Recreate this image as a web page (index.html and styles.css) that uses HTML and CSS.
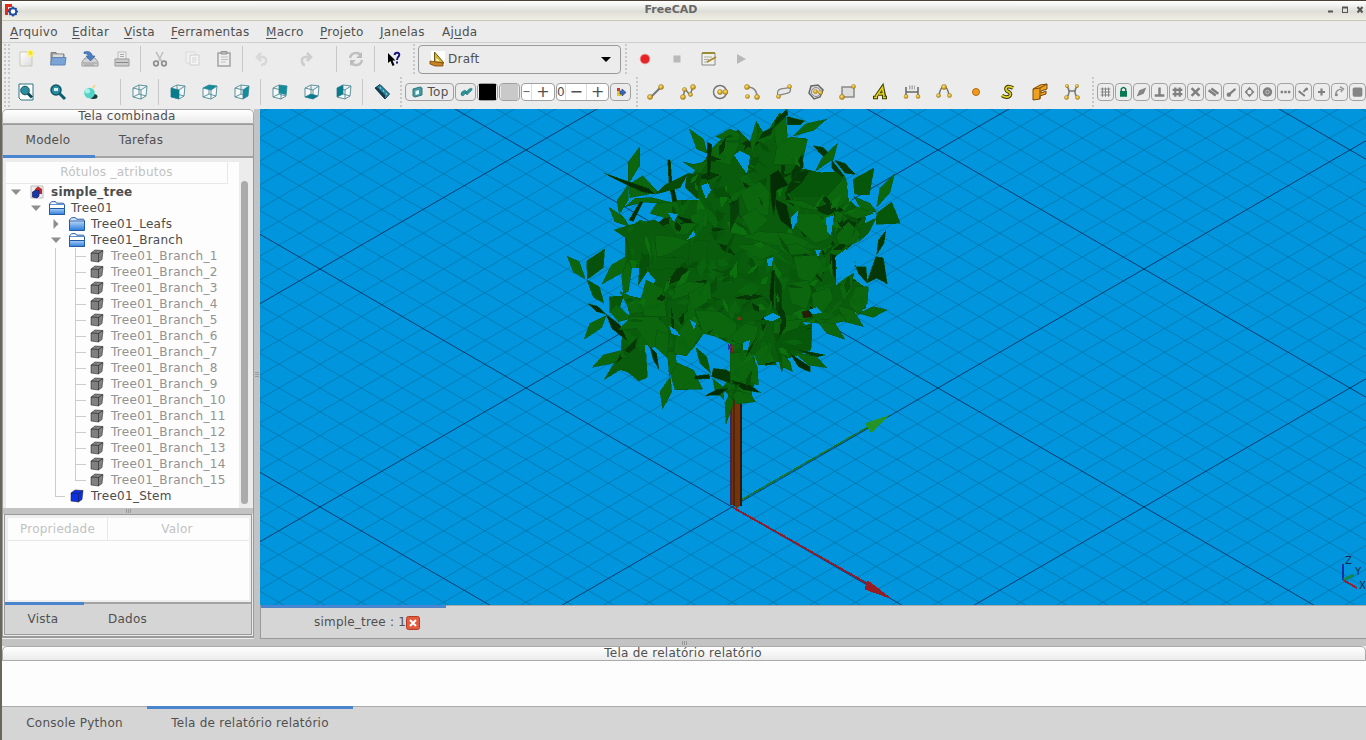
FILE: index.html
```html
<!DOCTYPE html>
<html lang="pt">
<head>
<meta charset="utf-8">
<title>FreeCAD</title>
<link rel="stylesheet" href="styles.css">
</head>
<body>
<svg class="defs" width="0" height="0">
  <defs>
    <linearGradient id="gFolder" x1="0" y1="0" x2="0" y2="1"><stop offset="0" stop-color="#a8cdf5"/><stop offset="1" stop-color="#2f7fdc"/></linearGradient>
    <linearGradient id="gPaper" x1="0" y1="0" x2="1" y2="1"><stop offset="0" stop-color="#fff"/><stop offset="1" stop-color="#dcdcdc"/></linearGradient>
    <radialGradient id="gBall" cx=".4" cy=".35" r=".7"><stop offset="0" stop-color="#ffe66b"/><stop offset="1" stop-color="#b88200"/></radialGradient>
    <symbol id="dot" viewBox="0 0 6 6"><circle cx="3" cy="3" r="2.5" fill="url(#gBall)" stroke="#8c6c20" stroke-width=".5"/></symbol>
    <symbol id="wire" viewBox="0 0 20 20"><path d="M3 6L9 3L17 4L16 14L11 17L3 15ZM3 6L11 8L17 4M11 8V17M9 3V12L3 15M9 12L16 14" fill="#fff" fill-opacity=".6" stroke="#4b8995" stroke-width=".9"/></symbol>
    <symbol id="folder" viewBox="0 0 16 14" preserveAspectRatio="none"><path d="M.5 13.500V3L2.500 .7H6.500L7.500 2.200H14.500L15.500 4V13.500Z" fill="#dcecff" stroke="#2459a8"/><path d="M1 5H15V13H1Z" fill="url(#gFolder)"/><path d="M1 4H15" stroke="#2459a8"/></symbol>
    <symbol id="folderOpen" viewBox="0 0 16 14" preserveAspectRatio="none"><path d="M.5 13.500V3L2.500 .7H6.500L7.500 2.200H14.500L15.500 4V13.500Z" fill="#fff" stroke="#2459a8"/><path d="M1 3.500H15" stroke="#5e91d2"/><path d="M.5 7.500H15.500V13.500H.5Z" fill="url(#gFolder)" stroke="#2459a8"/></symbol>
    <symbol id="cube" viewBox="0 0 14 14"><path d="M1 4L5 1L13 1.500L12 10.500L8.500 13L1 12Z" fill="currentColor" stroke="#222" stroke-opacity=".55"/><path d="M1 4L8.500 4.500L13 1.500M8.500 4.500V13" fill="none" stroke="#222" stroke-opacity=".6"/></symbol>
  </defs>
</svg>

<div class="window">
  <header class="titlebar">
    <svg class="logo" viewBox="0 0 14 14"><path d="M1 1H8V4H4V6H7V8H4V12H1Z" fill="#e02b18"/><circle cx="9" cy="8.500" r="3.300" fill="#fff" stroke="#1a50a8" stroke-width="2"/><path d="M9 3.500V5M9 12V13.500M4 8.500H5.500M12.500 8.500H14M5.500 5L6.500 6M11.500 11L12.500 12M12.500 5L11.500 6M5.500 12L6.500 11" stroke="#1a3f90" stroke-width="1.500"/></svg>
    <span class="title">FreeCAD</span>
    <svg class="winbtns" viewBox="0 0 40 12"><path d="M2 7.500H7" stroke="#555" stroke-width="2"/><rect x="16.500" y="3.500" width="5" height="5" fill="none" stroke="#555"/><path d="M16 3.500H22" stroke="#555" stroke-width="2"/><path d="M31.500 3L36.500 8.500M36.500 3L31.500 8.500" stroke="#555" stroke-width="2"/></svg>
  </header>
  <nav class="menubar">
    <span class="m1"><u>A</u>rquivo</span><span class="m2"><u>E</u>ditar</span><span class="m3"><u>V</u>ista</span><span class="m4"><u>F</u>erramentas</span><span class="m5"><u>M</u>acro</span><span class="m6"><u>P</u>rojeto</span><span class="m7"><u>J</u>anelas</span><span class="m8">Aj<u>u</u>da</span>
  </nav>

  <div class="toolbars">
    <div class="toolrow">
      <i class="handle"></i>
      <svg class="tb" viewBox="0 0 20 20"><path d="M4 3H16V17H4Z" fill="url(#gPaper)" stroke="#c9c9b8"/><circle cx="14.500" cy="4.500" r="3.800" fill="#fff27a" opacity=".8"/><circle cx="14.500" cy="4" r="2" fill="#f5e21c"/></svg>
      <svg class="tb" viewBox="0 0 20 20"><path d="M3 15V3.500H8L9 5H16V15Z" fill="#9a9a9a" stroke="#808080"/><path d="M5 5.500H15V9H5Z" fill="#ddd"/><path d="M2.500 16L4 8.500H18L17 16Z" fill="#7aa3d6" stroke="#5e86b8"/></svg>
      <svg class="tb" viewBox="0 0 20 20"><path d="M2 13L5 9H15L18 13V17H2Z" fill="#d4d4d4" stroke="#999"/><path d="M3 14H17M4 16H14" stroke="#999"/><path d="M4 3Q11 1 12.500 7H15L10.500 12L6 7H8.500Q8 4 4 4.500Z" fill="#4d7fc0" stroke="#3766a5" stroke-width=".7"/></svg>
      <svg class="tb" viewBox="0 0 20 20"><path d="M6 3H14V11H6Z" fill="#eee" stroke="#bbb"/><path d="M3 10H17V17H3Z" fill="#ccc" stroke="#999"/><path d="M4 13.500H16" stroke="#888"/><path d="M8 5.500H12M8 7.500H12" stroke="#aaa"/></svg>
      <i class="sep"></i>
      <svg class="tb" viewBox="0 0 20 20"><path d="M6 3L12 13M13 3L8 13" stroke="#c0c0c0" stroke-width="1.500"/><circle cx="6" cy="14.500" r="2.300" fill="none" stroke="#8e8e8e" stroke-width="1.700"/><circle cx="14" cy="14.500" r="2.300" fill="none" stroke="#8e8e8e" stroke-width="1.700"/></svg>
      <svg class="tb" viewBox="0 0 20 20"><path d="M4 3H13V14H4Z" fill="#f1f1f1" stroke="#dadada"/><path d="M8 6H17V16H8Z" fill="#f5f5f5" stroke="#cfcfcf"/><path d="M10 9H15M10 11H15M10 13H14" stroke="#d5d5d5"/></svg>
      <svg class="tb" viewBox="0 0 20 20"><path d="M4 4H16V17H4Z" fill="#eee" stroke="#a2a2a2" stroke-width="1.500"/><path d="M7 2.500H13V5H7Z" fill="#bbb" stroke="#929292"/><path d="M7 8H14M7 10.500H14M7 13H12" stroke="#c0c0c0"/></svg>
      <i class="sep"></i>
      <svg class="tb drop" viewBox="0 0 20 20"><path d="M5 8H11Q15 9 14 13Q13 16 9 16M9 4L5 8L9 12" fill="none" stroke="#d8d8d8" stroke-width="2.500"/></svg>
      <svg class="tb drop" viewBox="0 0 20 20"><path d="M15 8H9Q5 9 6 13Q7 16 9 16M11 4L15 8L11 12" fill="none" stroke="#cdcdcd" stroke-width="2.500"/></svg>
      <i class="sep"></i>
      <svg class="tb" viewBox="0 0 20 20"><path d="M4 9Q5 4 10 4Q13 4 15 6M16 11Q15 16 10 16Q7 16 5 14" fill="none" stroke="#c0c0c0" stroke-width="2.500"/><path d="M16 3V9H10ZM4 17V11H10Z" fill="#bbb"/></svg>
      <i class="sep"></i>
      <svg class="tb" viewBox="0 0 20 20"><path d="M4 4V14L6.500 12L8.500 17L10.500 16L8.500 11.500H11.500Z" fill="#000"/><path d="M10.500 6Q11 3.500 13.500 3.800Q16 4.300 15 7Q13 8.500 13 11M13 12.500V14.500" fill="none" stroke="#15157a" stroke-width="2"/></svg>
      <i class="handle h1"></i>
      <div class="combo"><svg viewBox="0 0 18 18"><path d="M2 1H16V15H2Z" fill="#fff"/><path d="M5.500 2L15 13H5.500Z" fill="#d9b52a" stroke="#6d5b14"/><path d="M7.500 8L10.500 11H7.500Z" fill="#fff"/><path d="M1 11L14 13V16H6L1 14Z" fill="#c98224" stroke="#754710" stroke-width=".8"/></svg><span>Draft</span><b class="arrow"></b></div>
      <i class="handle h2"></i>
      <svg class="tb" viewBox="0 0 20 20"><circle cx="10" cy="10" r="4.800" fill="#e52525" stroke="#f08a8a" stroke-width=".8"/></svg>
      <svg class="tb" viewBox="0 0 20 20"><path d="M6.500 6.500H13.500V13.500H6.500Z" fill="#b9b9b9"/></svg>
      <svg class="tb" viewBox="0 0 20 20"><path d="M3 4H16V16H3Z" fill="#f1f1e9" stroke="#888"/><path d="M3 4H16" stroke="#9a8b3b" stroke-width="2"/><path d="M5 8H13M5 10.500H10M5 13H9" stroke="#aaa"/><path d="M8 13L17 8" stroke="#a78b2c" stroke-width="2"/></svg>
      <svg class="tb" viewBox="0 0 20 20"><path d="M6 5L15 10L6 15Z" fill="#b8b8b8"/></svg>
    </div>

    <div class="toolrow">
      <i class="handle"></i>
      <svg class="tb" viewBox="0 0 20 20"><path d="M3 2H17V18H5L3 16Z" fill="#fff" stroke="#2b7484"/><circle cx="9" cy="8.500" r="4.300" fill="#2c8d9e" stroke="#0e5361"/><path d="M12 11.500L16 15.500" stroke="#0b4655" stroke-width="3"/></svg>
      <svg class="tb" viewBox="0 0 20 20"><circle cx="8" cy="8" r="5" fill="#2c8d9e" stroke="#0c5567" stroke-width="1.500"/><path d="M6 6H10V9H6Z" fill="#d2f4f7"/><path d="M11.500 11.500L17 17" stroke="#0b5d70" stroke-width="3"/></svg>
      <svg class="tb" viewBox="0 0 20 20"><ellipse cx="13.500" cy="14.500" rx="4" ry="2.500" fill="#173d3a"/><circle cx="9.500" cy="11" r="5.300" fill="#52d3c5"/><circle cx="7.500" cy="9" r="2.500" fill="#a4f2e8"/><path d="M13 6L15 3" stroke="#f4d684" stroke-width="2"/></svg>
      <i class="sep wide"></i>
      <svg class="tb" viewBox="0 0 20 20"><use href="#wire"/></svg>
      <i class="sep"></i>
      <svg class="tb" viewBox="0 0 20 20"><use href="#wire"/><path d="M3 6L11 8V17L3 15Z" fill="#087c8c"/></svg>
      <svg class="tb" viewBox="0 0 20 20"><use href="#wire"/><path d="M3 6L9 3L17 4L11 8Z" fill="#158c9c"/></svg>
      <svg class="tb" viewBox="0 0 20 20"><use href="#wire"/><path d="M11 8L17 4L16 14L11 17Z" fill="#158c9c"/></svg>
      <i class="sep"></i>
      <svg class="tb" viewBox="0 0 20 20"><use href="#wire"/><path d="M9 3L17 4L16 13L9 11Z" fill="#158c9c"/></svg>
      <svg class="tb" viewBox="0 0 20 20"><use href="#wire"/><path d="M3 15L9 12L16 14L11 17Z" fill="#087c8c"/></svg>
      <svg class="tb" viewBox="0 0 20 20"><use href="#wire"/><path d="M3 6L9 3V12L3 15Z" fill="#087c8c"/></svg>
      <i class="sep"></i>
      <svg class="tb" viewBox="0 0 20 20"><path d="M3 6L8 2.500L17.500 12L13 17Z" fill="#2787a1" stroke="#173d50"/><path d="M3 6L13 17V13L5 5Z" fill="#16394b"/><path d="M8 5L9 7M11 8L12 10M14 11L15 13" stroke="#8fd3df"/></svg>
      <i class="handle h3"></i>
      <div class="btn top"><svg viewBox="0 0 14 14"><path d="M3 4L10 2L12 3V10L5 12L3 11Z" fill="#4a979d" stroke="#2a7981"/><path d="M5.500 6L9 5V9L5.500 10Z" fill="#dff"/></svg>Top</div>
      <div class="btn lk"><svg viewBox="0 0 14 14"><path d="M2 10Q1 7 6 5L8 7L4 11ZM6 8L10 4Q14 2 13 5L8 10Z" fill="#2d959c" stroke="#206b75" stroke-width=".5"/></svg></div>
      <div class="btn sw"><b class="black"></b></div>
      <div class="btn sw"><b class="grey"></b></div>
      <div class="spin s1"><span class="cut">−</span><span>+</span></div>
      <div class="spin s2"><em>0</em><span>−</span><span>+</span></div>
      <div class="btn sw lk2"><svg viewBox="0 0 14 14"><path d="M3 3H6V11H3Z" fill="#cf3535"/><path d="M3 6H7V11H3Z" fill="#e5c62d"/><path d="M6 6H8V4L12 7.500L8 11V9H6Z" fill="#3b66b5" stroke="#234480" stroke-width=".7"/></svg></div>
      <i class="handle h4"></i>
      <svg class="tb" viewBox="0 0 20 20"><path d="M5 15L15 5" stroke="#777" stroke-width="2"/><use href="#dot" x="1" y="12" width="6" height="6"/><use href="#dot" x="12" y="2" width="6" height="6"/></svg>
      <svg class="tb" viewBox="0 0 20 20"><path d="M5 15L7 7L12 13L15 5" stroke="#777" stroke-width="1.500" fill="none"/><use href="#dot" x="2" y="12" width="6" height="6"/><use href="#dot" x="4" y="5" width="5" height="5"/><use href="#dot" x="10" y="10" width="5" height="5"/><use href="#dot" x="12" y="2" width="6" height="6"/></svg>
      <svg class="tb" viewBox="0 0 20 20"><circle cx="10" cy="10" r="6.500" fill="#eee" stroke="#777" stroke-width="1.500"/><use href="#dot" x="7" y="7" width="6" height="6"/><use href="#dot" x="12.500" y="7" width="6" height="6"/></svg>
      <svg class="tb" viewBox="0 0 20 20"><path d="M5 5Q15 5 15 15" stroke="#888" stroke-width="1.500" fill="none"/><use href="#dot" x="2" y="2" width="6" height="6"/><use href="#dot" x="3" y="12" width="5" height="5"/><use href="#dot" x="12" y="12" width="6" height="6"/></svg>
      <svg class="tb" viewBox="0 0 20 20"><path d="M4 14C1 4 12 8 16 5C19 14 9 10 4 14Z" stroke="#888" fill="#e8e8e8" stroke-width="1.300"/><use href="#dot" x="2" y="12" width="5" height="5"/><use href="#dot" x="13" y="2" width="5" height="5"/></svg>
      <svg class="tb" viewBox="0 0 20 20"><path d="M5 4L12 3L17 8L14 15L8 17L3 11Z" stroke="#666" fill="#ddd" stroke-width="1.500"/><circle cx="10" cy="10" r="4.500" fill="none" stroke="#888"/><use href="#dot" x="7" y="7" width="5" height="5"/><use href="#dot" x="12" y="8" width="5" height="5"/></svg>
      <svg class="tb" viewBox="0 0 20 20"><path d="M4 5H16V15H4Z" stroke="#888" fill="#ddd" stroke-width="1.500"/><use href="#dot" x="1" y="12" width="6" height="6"/><use href="#dot" x="13" y="2" width="5" height="5"/></svg>
      <svg class="tb" viewBox="0 0 20 20"><path d="M3 15.500H8M12 15.500H17M6 14.500L12.500 5L14.500 14.500M9 12H14" stroke="#3d3b08" stroke-width="3.500" fill="none"/><path d="M4 15.500H7M13 15.500H16M6 14.500L12.500 5.500L14 14.500M9 12H14" stroke="#e3d41b" stroke-width="1.700" fill="none"/></svg>
      <svg class="tb" viewBox="0 0 20 20"><path d="M4 15V5M16 15V5M4 10H16" stroke="#666" stroke-width="1.500"/><path d="M7 5.500H13" stroke="#aaa" stroke-width="4" stroke-dasharray="1.500 1"/><use href="#dot" x="1.500" y="12" width="5" height="5"/><use href="#dot" x="13.500" y="12" width="5" height="5"/></svg>
      <svg class="tb" viewBox="0 0 20 20"><path d="M5 14Q6 5 10 5Q14 5 15 14" stroke="#777" stroke-width="1.500" fill="none"/><use href="#dot" x="2" y="11" width="5" height="5"/><use href="#dot" x="7" y="2" width="6" height="6"/><use href="#dot" x="13" y="11" width="5" height="5"/></svg>
      <svg class="tb" viewBox="0 0 20 20"><circle cx="10" cy="10" r="3.500" fill="#f09a1c" stroke="#b9690b"/></svg>
      <svg class="tb" viewBox="0 0 20 20"><path d="M15 6Q9 3 8 6.500Q8 9 11 10Q14 12 11 14.500Q8 16 4 13.500" stroke="#35350b" stroke-width="3.700" fill="none"/><path d="M15 6Q9 3 8 6.500Q8 9 11 10Q14 12 11 14.500Q8 16 4 13.500" stroke="#e0d21a" stroke-width="1.800" fill="none"/></svg>
      <svg class="tb" viewBox="0 0 20 20"><path d="M3 7L10 3L17 2V7L11 9V11L16 9V12L10 14V17L3 18Z" fill="#f0a020" stroke="#794c0c"/><path d="M3 7L10 6V17M10 6L17 2" stroke="#794c0c" fill="none"/></svg>
      <svg class="tb" viewBox="0 0 20 20"><path d="M5 15Q9 10 5 4M15 15Q11 10 15 4M7 9H13" stroke="#777" stroke-width="1.500" fill="none"/><use href="#dot" x="2" y="13" width="5" height="5"/><use href="#dot" x="13" y="13" width="5" height="5"/><use href="#dot" x="3" y="2" width="4" height="4"/><use href="#dot" x="13" y="2" width="4" height="4"/></svg>
      <i class="handle h5"></i>
      <div class="snaps">
        <svg viewBox="0 0 17 18"><path d="M3 5.500H14M3 9H14M3 12.500H14M5 4V14.500M8.500 4V14.500M12 4V14.500" stroke="#858585" stroke-width="1.200"/></svg>
        <svg viewBox="0 0 17 18"><path d="M6 9V5.500Q8.500 2.500 11 5.500V9" stroke="#087752" stroke-width="1.700" fill="none"/><path d="M4.500 8H12.500V14.500H4.500Z" fill="#087752"/></svg>
        <svg viewBox="0 0 17 18"><path d="M3 14L6 7L14 4L11 11Z" fill="#858585"/></svg>
        <svg viewBox="0 0 17 18"><path d="M3 13H14M8.500 4V13" stroke="#808080" stroke-width="2.800"/></svg>
        <svg viewBox="0 0 17 18"><path d="M3 6.500H14M3 11.500H14M6 4V14.500M11 4V14.500" stroke="#808080" stroke-width="2.500"/></svg>
        <svg viewBox="0 0 17 18"><path d="M4 4.500L13 13.500M13 4.500L4 13.500" stroke="#808080" stroke-width="2.800"/></svg>
        <svg viewBox="0 0 17 18"><path d="M3 7L11 13M6 5L14 11" stroke="#808080" stroke-width="2.800"/></svg>
        <svg viewBox="0 0 17 18"><path d="M5.500 12L13 5.500" stroke="#808080" stroke-width="2.500"/><circle cx="5.500" cy="12" r="2.500" fill="#808080"/></svg>
        <svg viewBox="0 0 17 18"><path d="M8.500 3L14 9L8.500 15L3 9Z" fill="#808080"/><circle cx="8.500" cy="9" r="2.500" fill="#eee"/></svg>
        <svg viewBox="0 0 17 18"><circle cx="8.500" cy="9" r="5.300" fill="#808080"/><circle cx="8.500" cy="9" r="2" fill="none" stroke="#ddd" stroke-width=".7"/></svg>
        <svg viewBox="0 0 17 18"><path d="M3 9H14" stroke="#808080" stroke-width="2.800" stroke-dasharray="2.800 1.300"/></svg>
        <svg viewBox="0 0 17 18"><path d="M3 8L10 13.500M8.500 9L11 6" stroke="#808080" stroke-width="2.200"/><circle cx="12" cy="5.500" r="1.700" fill="#808080"/></svg>
        <svg viewBox="0 0 17 18"><path d="M4.500 9H12.500M8.500 5V13" stroke="#808080" stroke-width="2.500"/></svg>
        <svg viewBox="0 0 17 18"><path d="M4 13Q4 6 11 6M9 3L13 5.500L10 9" stroke="#999" stroke-width="1.700" fill="none"/><circle cx="5" cy="12" r="1.700" fill="#888"/></svg>
        <svg viewBox="0 0 17 18"><rect x="3" y="4" width="11" height="10.500" rx="2" fill="#858585"/></svg>
      </div>
    </div>
  </div>

  <main class="work">
    <aside class="side">
      <div class="dock-title">Tela combinada</div>
      <div class="side-body">
        <div class="tabs top-tabs"><span class="tab on">Modelo</span><span class="tab">Tarefas</span></div>
        <div class="tree">
          <div class="tree-main">
            <div class="tree-head">Rótulos _atributos</div>
            <div class="row lv0"><i class="exp open"></i><svg viewBox="0 0 14 14"><path d="M1 1H13V13H1Z" fill="#eee" stroke="#bbb"/><path d="M5 4L8 1.500L12 4V9H6Z" fill="#c12525"/><path d="M2.500 7L5 5.500H9V11L7 13L2.500 12Z" fill="#1b38a8" stroke="#111d60" stroke-width=".7"/></svg><strong>simple_tree</strong></div>
            <div class="row lv1"><i class="exp open"></i><svg class="f"><use href="#folderOpen"/></svg><span>Tree01</span></div>
            <div class="row lv2"><i class="exp closed"></i><svg class="f"><use href="#folder"/></svg><span>Tree01_Leafs</span></div>
            <div class="row lv2"><i class="exp open"></i><svg class="f"><use href="#folderOpen"/></svg><span>Tree01_Branch</span></div>
            <div id="branches"></div>
            <div class="row stem"><i class="elbow"></i><svg class="c"><use href="#cube"/></svg><span>Tree01_Stem</span></div>
          </div>
          <div class="scroll"><i></i></div>
        </div>
        <div class="split"><i></i><i></i><i></i></div>
        <div class="props">
          <div class="prop-table"><div class="prop-head"><span>Propriedade</span><span>Valor</span></div></div>
          <div class="tabs bottom-tabs"><span class="tab on">Vista</span><span class="tab">Dados</span></div>
        </div>
      </div>
    </aside>
    <div class="vsplit"><i></i><i></i><i></i></div>
    <section class="mdi">
      <svg class="scene" viewBox="260 109 1106 496" shape-rendering="crispEdges">
        <defs><clipPath id="crown"><path id="crownPath" d="M702 163L720 140L738 130L750 142L757 122L765 135L780 112L786 128L776 138L806 138L800 168L818 172L845 176L850 200L866 218L862 236L846 250L850 258L835 270L836 285L850 276L866 288L866 308L845 316L828 324L802 322L812 330L811 350L790 358L765 366L754 355L757 375L750 400L733 400L722 388L735 372L733 345L705 332L692 350L672 356L660 345L645 345L645 378L620 370L622 330L630 318L625 295L650 300L655 280L645 268L625 268L625 230L640 220L655 225L672 212L672 200L700 200L685 188L695 170Z"/></clipPath></defs>
        <rect x="260" y="109" width="1106" height="496" fill="#0095dc"/>
        <path id="minor" class="grid-line" fill="none" stroke="#006f9f" stroke-width=".65"/>
        <path id="major" class="grid-line" fill="none" stroke="#03254f" stroke-width=".8"/>
        <path d="M741 500L868 427" stroke="#157529" stroke-width="1.500"/>
        <path d="M865 423L890 415L871 433Z" fill="#259428"/>
        <path d="M734 508L868 584" stroke="#8b1f2f" stroke-width="2"/>
        <path d="M868 581L890 598L865 589Z" fill="#971d24" stroke="#971d24"/>
        <path d="M731 340H742V505L737 508L731 504Z" fill="#72340d"/>
        <path d="M730 340H732V505H730Z" fill="#44245e"/><path d="M733 350H735V506H733Z" fill="#512508"/><path d="M741 390V506" stroke="#2f190c" stroke-width="1.500"/>
        <use href="#crownPath" fill="#085c0b"/>
        <g id="foliage" clip-path="url(#crown)"></g>
        <g fill="#0b660e" stroke="#07500a" stroke-width="1.500">
          <g transform="translate(560 105) scale(.33333)">
            <path d="M239 126L240 180L205 237L204 172Z"/><path d="M205 240L248 212L295 262L210 278Z"/><path d="M204 240L205 285L178 328L171 287Z"/>
            <path d="M133 205L265 250L285 267L250 262L200 240Z" fill="#042c05"/><path d="M323 165L331 165L337 245L327 238Z" fill="#042c05"/><path d="M327 240L340 238L352 292L338 290Z" fill="#042c05"/>
            <path d="M285 268L315 240L385 205L360 248Z" fill="#074c09"/><path d="M195 305L225 280L275 278L345 295L250 292Z"/>
            <path d="M240 290L250 290L220 350L207 345Z" fill="#042c05"/><path d="M147 307L190 335L208 365L165 350Z"/><path d="M388 72L430 102L442 145L410 132Z"/>
            <path d="M270 325L290 295L350 290L362 315L320 340Z"/><path d="M375 245L382 207L425 205L412 282Z" fill="#074c09"/><path d="M368 170L400 178L448 168L420 205Z"/>
            <path d="M442 145L475 110L540 112L510 180L460 168Z"/><path d="M468 95L510 72L540 85L540 108L495 108Z"/><path d="M442 112L456 118L450 218L442 210Z" fill="#042c05"/>
            <path d="M342 330L418 350L380 357Z" fill="#042c05"/><path d="M340 390L370 355L412 355L380 390Z"/><path d="M390 332L448 310L440 368L395 350Z"/>
            <path d="M22 454L58 470L75 520L40 502Z"/><path d="M134 432L130 488L82 523L80 468Z" fill="#07510a"/><path d="M202 452L192 500L126 537L155 480Z"/>
            <path d="M203 465L215 490L205 560L190 565L185 510Z"/><path d="M162 375L210 360L285 345L345 390L310 450L210 465L200 400Z" fill="#085c0b"/><path d="M235 540L240 465L270 440L265 495Z" fill="#07510a"/>
            <path d="M285 390L345 395L390 410L330 445L290 460Z"/><path d="M255 495L285 455L390 460L350 490Z" fill="#085c0b"/><path d="M390 410L445 405L440 490L385 480Z" fill="#085c0b"/>
          </g>
          <g transform="translate(730 105) scale(.33333)">
            <path d="M136 43L172 12L173 30L132 66Z" fill="#053806"/><path d="M172 35L224 48L210 60L172 60Z" fill="#053806"/><path d="M190 93L225 58L290 42L253 75Z"/><path d="M132 70L168 36L172 98L140 130Z"/>
            <path d="M85 103L100 80L132 64L122 90Z" fill="#053806"/><path d="M62 105L79 48L84 88L65 155Z"/><path d="M140 130L180 96L232 103L215 180L130 178Z"/><path d="M217 145L220 185L185 240L184 202Z" fill="#053806"/>
            <path d="M249 122L280 127L312 163L280 155Z" fill="#053806"/><path d="M323 114L310 162L257 198L275 160Z"/><path d="M305 165L345 215L325 215L305 188Z" fill="#053806"/><path d="M315 166L345 175L376 208L345 205Z" fill="#053806"/>
            <path d="M369 223L432 189L418 270L374 268Z" fill="#07570a"/><path d="M494 206L480 262L440 307L450 250Z"/><path d="M440 325L485 291L511 355L438 358Z" fill="#07570a"/><path d="M372 275L420 295L440 322L395 315Z"/><path d="M343 325L380 305L430 325L380 342Z"/><path d="M438 340L415 385L385 411L395 360Z" fill="#085c0b"/><path d="M318 392L355 350L392 385L380 412L330 428Z"/>
            <path d="M187 240L240 203L320 202L345 225L290 275L180 275Z" fill="#07570a"/><path d="M290 275L345 215L362 270L320 315Z"/><path d="M312 400L314 318L342 325Z"/><path d="M160 285L215 287L285 320L220 310Z"/>
            <path d="M195 362L205 325L260 325L295 360L300 400L255 415Z"/><path d="M205 200L240 195L215 235L165 275L175 240Z" fill="#053806"/><path d="M130 280L170 300L187 375L150 345Z" fill="#042c05"/><path d="M120 210L145 195L175 240L140 255L132 335L122 280Z" fill="#042c05"/>
            <path d="M468 376L462 415L440 450L445 405Z" fill="#053806"/><path d="M346 446L378 475L378 485L355 475Z" fill="#053806"/><path d="M378 485L408 485L412 535L385 505Z" fill="#053806"/><path d="M437 455L460 458L472 537L440 520L410 535Z" fill="#053806"/>
            <path d="M260 445L300 418L352 440L330 448Z"/><path d="M190 455L260 450L280 480L240 535L205 520Z"/><path d="M35 395L85 380L180 385L240 410L220 435L130 420Z"/><path d="M305 450L317 450L318 530L308 500Z" fill="#042c05"/>
            <path d="M30 260L90 230L120 260L115 330L60 340Z"/><path d="M0 300L25 255L28 320L0 380Z" fill="#063f07"/><path d="M35 335L75 310L115 345L65 390Z"/><path d="M20 420L110 418L155 440L90 465Z"/><path d="M140 425L200 415L255 445L175 450Z"/><path d="M320 540L345 520L370 505L365 540Z"/>
          </g>
          <g transform="translate(560 270) scale(.33333)">
            <path d="M81 30L118 50L132 100L100 82Z" fill="#07570a"/><path d="M84 101L112 108L138 132L110 125Z" fill="#042c05"/><path d="M138 137L125 173L72 208L90 160Z"/><path d="M138 132L180 165L204 215L155 175Z" fill="#042c05"/>
            <path d="M148 80L190 78L180 110L150 130Z" fill="#07570a"/><path d="M180 65L240 90L265 125L215 130Z"/><path d="M258 30L310 55L320 140L255 140L240 100Z"/><path d="M150 125L170 103L215 145L175 155Z"/>
            <path d="M175 180L215 140L290 140L325 175L330 215L270 235L230 175Z"/><path d="M97 292L130 255L210 235L180 275Z"/><path d="M133 328L165 275L235 230L258 250L262 322L237 333L188 295Z" fill="#085c0b"/><path d="M232 202L225 235L168 280L180 255Z" fill="#053806"/>
            <path d="M270 230L290 250L297 298L280 270Z" fill="#042c05"/><path d="M290 180L325 195L325 240L345 258L320 262L285 230Z"/><path d="M332 270L400 300L428 357L345 360L330 305Z"/><path d="M331 320L335 365L308 417L300 365Z"/><path d="M322 245L345 245L350 285L328 318Z"/>
            <path d="M340 250L350 190L390 140L430 185L380 258Z"/><path d="M405 120L480 125L530 160L530 215L430 190Z"/><path d="M408 233L440 260L452 310L420 280Z" fill="#07570a"/><path d="M404 318L448 313L450 326L405 328Z" fill="#042c05"/><path d="M455 320L460 295L500 300L540 325V350Z" fill="#053806"/><path d="M458 325L488 350L492 390L465 360Z"/><path d="M436 377L470 358L505 355L478 375Z" fill="#042c05"/><path d="M495 400L515 355L520 400L498 462Z"/>
            <path d="M320 65L385 35L445 40L385 75L340 90Z"/><path d="M318 95L385 75L380 130L325 160Z" fill="#085c0b"/><path d="M385 70L450 35L455 90L400 120Z"/>
          </g>
          <g transform="translate(730 270) scale(.33333)">
            <path d="M385 130L430 110L470 120L430 142Z"/><path d="M323 108L370 120L400 170L345 155Z"/><path d="M255 145L310 152L345 208L290 190Z"/><path d="M357 105L375 50L415 50L412 100L385 135Z"/><path d="M280 158L330 130L348 152L315 160Z"/><path d="M328 50L370 10L365 60L340 95Z"/>
            <path d="M132 155L217 148L200 185L165 195L130 190Z"/><path d="M72 250L110 218L140 285L85 285Z"/><path d="M135 220L170 185L245 160L243 235L180 240L155 305Z" fill="#07570a"/><path d="M180 250L240 290L241 307L205 290Z" fill="#042c05"/><path d="M200 238L285 255L255 262Z" fill="#053806"/><path d="M190 245L260 260L290 293L235 285Z"/><path d="M155 250L180 275L187 305L155 290Z"/>
            <path d="M0 200L45 160L85 170L72 230L20 220Z"/><path d="M0 250L60 245L82 290L85 345L40 335L0 340Z"/><path d="M0 330L60 345L92 368L40 360Z" fill="#042c05"/><path d="M0 360L60 370L76 395L20 402Z"/><path d="M215 125L248 118L248 140L220 145Z" fill="#291d07"/>
            <path d="M170 40L235 30L245 65L230 120L185 100Z"/><path d="M245 70L300 50L310 85L270 140L250 130Z"/><path d="M125 0H135L130 120L118 80Z" fill="#042c05"/><path d="M135 10L155 45L155 150L138 120Z" fill="#063f07"/>
          </g>
        </g>
        <g id="foliageTop" clip-path="url(#crown)"></g>
        <g fill="#0095dc">
          <path d="M734 155L740 151L750 156L747 174L738 161ZM791 218L798 210L797 222L792 230ZM826 218L834 215L831 236L827 232ZM847 184L852 190L853 198L849 203ZM767 259L773 257L772 266L768 266ZM815 250L821 250L818 257ZM701 186L708 183L711 190L706 199ZM668 213L678 214L674 222ZM687 240L694 230L695 236ZM763 318L773 313L781 317L773 321L765 320ZM743 343L750 340L748 350L743 350ZM669 326L676 330L680 336L672 334ZM808 310L817 307L822 313L812 314ZM835 257L846 249L851 258L856 264L848 276L838 277ZM690 320L696 323L694 330Z"/>
        </g>
        <path d="M728 344L733 347L728 350Z" fill="#233c9e"/><path d="M737 318H741" stroke="#71380f" stroke-width="3"/>
        <path d="M1343 580V564" stroke="#112fa1" stroke-width="2"/><path d="M1343 580L1354 575" stroke="#16874a" stroke-width="3"/><path d="M1343 580L1357 588" stroke="#922535" stroke-width="2"/>
        <g class="axis"><text x="1345" y="564">Z</text><text x="1355" y="575">Y</text><text x="1359" y="589">X</text></g>
      </svg>
      <div class="mdi-tabs"><span class="doc">simple_tree : 1</span><svg viewBox="0 0 14 14"><rect x=".5" y=".5" width="13" height="13" rx="2" fill="#e35a3c" stroke="#b83c24"/><path d="M4 4L10 10M10 4L4 10" stroke="#fff" stroke-width="2"/></svg></div>
    </section>
  </main>
  <div class="hsplit"><i></i><i></i><i></i></div>
  <section class="report">
    <div class="dock-title">Tela de relatório relatório</div>
    <div class="output"></div>
    <div class="tabs report-tabs"><span class="tab">Console Python</span><span class="tab on">Tela de relatório relatório</span></div>
  </section>
</div>
<script src="scene.js"></script>
</body>
</html>
```
FILE: styles.css
```css
* { box-sizing: border-box; }
body { margin: 0; width: 1366px; height: 740px; overflow: hidden; background: #ececec; color: #505050; font: 12px/16px "DejaVu Sans", sans-serif; letter-spacing: .26px; }
.defs { display: block; position: absolute; }
.window { width: 1366px; height: 740px; border-left: 2px solid #6a655f; display: grid; grid-template-rows: 21px 22px 66px 530px 7px 94px; }
.titlebar { display: flex; align-items: center; border-top: 1px solid #4a4036; border-bottom: 1px solid #c9c8b8; background: linear-gradient(#fff, #deded8 55%, #f0f0e6); font-weight: bold; font-size: 11px; letter-spacing: 0; color: #686868; padding-bottom: 1px; }
.logo { width: 14px; height: 14px; margin-left: 2px; }
.title { flex: 1; text-align: center; padding-right: 2px; }
.winbtns { width: 40px; height: 12px; flex: none; }
.menubar { display: flex; align-items: center; border-bottom: 1px solid #cfcfcf; padding-left: 8px; }
.menubar span { flex: none; }
.menubar u { text-underline-offset: 2px; }
.m1 { width: 62px; } .m2 { width: 52px; } .m3 { width: 47px; } .m4 { width: 95px; } .m5 { width: 54px; } .m6 { width: 60px; } .m7 { width: 62px; }
.toolbars { display: grid; grid-template-rows: 32px 34px; overflow: hidden; }
.toolrow { display: flex; align-items: center; height: 32px; overflow: hidden; }
.toolrow + .toolrow { height: 34px; }
.tb { flex: none; width: 32px; height: 20px; }
.drop { width: 44px; padding-right: 12px; }
.sep { flex: none; width: 6px; height: 26px; background: linear-gradient(#c8c8c8, #c8c8c8) 2px 0 / 1px 100% no-repeat; }
.sep.wide { width: 18px; background-position: 14px 0; }
.handle { flex: none; width: 8px; height: 30px; background: radial-gradient(circle at 1px 1px, #bcbcbc 0.6px, transparent 1px) 2px 0 / 4px 4px; }
.h1 { width: 6px; margin: 0 1px 0 1px; } .h2 { width: 6px; margin: 0 0 0 2px; } .h3 { width: 6px; margin-right: 1px; } .h4 { width: 6px; margin: 0 0 0 2px; } .h5 { width: 6px; margin: 0 1px 0 2px; }
.combo { flex: none; width: 203px; height: 29px; border: 1px solid #999; border-radius: 4px; display: flex; align-items: center; padding: 0 9px 0 10px; }
.combo svg { width: 18px; height: 18px; margin-right: 1px; }
.combo span { flex: 1; }
.arrow { border: 5px solid transparent; border-top: 5px solid #000; border-bottom: 0; }
.btn { flex: none; height: 18px; border: 1px solid #a0a0a0; border-radius: 4px; display: flex; align-items: center; justify-content: center; margin-right: 1px; }
.btn svg { width: 14px; height: 14px; }
.btn.top { width: 49px; gap: 3px; }
.btn.lk { width: 21px; }
.btn.sw { width: 21px; }
.btn b { width: 17px; height: 16px; }
.black { background: #000; } .grey { background: #c9c9c9; }
.spin { flex: none; height: 18px; border: 1px solid #a0a0a0; border-radius: 4px; background: #fff; display: flex; align-items: center; overflow: hidden; margin-right: 1px; font-size: 16px; line-height: 16px; letter-spacing: 0; }
.spin span { width: 22px; text-align: center; border-left: 1px solid #ddd; }
.spin .cut { width: 9px; border: 0; font-size: 10px; }
.s1 { width: 34px; } .s1 span:last-child { width: 24px; } .s2 { width: 53px; }
.spin em { width: 8px; font: 12px "DejaVu Sans", sans-serif; }
.snaps { display: flex; gap: 1px; flex: none; }
.snaps svg { flex: none; width: 17px; height: 18px; border: 1px solid #a2a2a2; border-radius: 4px; }
.work { display: grid; grid-template-columns: 252px 6px 1106px; }
.side { display: grid; grid-template-rows: 15px 514px; }
.dock-title { border: 1px solid #aaa; border-radius: 5px 5px 0 0; background: linear-gradient(#fff, #ebebeb); text-align: center; line-height: 12px; height: 15px; padding-right: 2px; }
.side-body { border: 1px solid #9a9a9a; border-width: 1px 1px 2px; display: grid; grid-template-rows: 33px 350px 6px 1fr; }
.tabs { display: flex; background: #d5d5d5; }
.tab { display: flex; align-items: center; justify-content: center; }
.top-tabs { border-bottom: 2px solid #a4a4a4; }
.top-tabs .tab { width: 92px; height: 33px; padding-bottom: 4px; }
.top-tabs .on { border-bottom: 3px solid #4a86cf; padding-bottom: 1px; padding-right: 2px; }
.tree { display: flex; padding: 4px 4px 0 3px; }
.tree-main { width: 233px; height: 346px; background: #fdfdfd; overflow: hidden; }
.tree-head { height: 22px; width: 222px; border: 1px solid #e8e8e8; border-width: 0 1px 1px 0; text-align: center; color: #c2c2c2; line-height: 21px; }
.scroll { width: 10px; padding: 19px 1px 2px 2px; }
.scroll i { display: block; height: 323px; width: 7px; border-radius: 4px; background: #ababab; }
.row { display: flex; align-items: center; height: 16px; color: #4c4c4c; letter-spacing: .27px; white-space: nowrap; }
.row svg { flex: none; width: 14px; height: 14px; }
.row svg.f { width: 16px; height: 14px; margin-right: 6px; }
.lv0 { padding-left: 5px; } .lv0 svg { margin: 0 7px 0 9px; }
.lv1 { padding-left: 25px; } .lv2 { padding-left: 45px; }
.lv1 .exp, .lv2 .exp { margin-right: 8px; }
.exp { flex: none; width: 10px; height: 10px; background: #8e8e8e; }
.exp.open { clip-path: polygon(0 25%, 100% 25%, 50% 80%); }
.exp.closed { clip-path: polygon(25% 0, 75% 50%, 25% 100%); }
.branch { padding-left: 49px; color: #929292; letter-spacing: .3px; }
.branch svg { color: #808080; margin: 0 7px 0 4px; }
.branch .guide { width: 20px; height: 16px; border-left: 1px solid #ccc; }
.elbow { width: 11px; height: 16px; background: linear-gradient(#ccc, #ccc) 0 0 / 1px 8px no-repeat, linear-gradient(#ccc, #ccc) 0 8px / 10px 1px no-repeat; }
.branch .tee { width: 11px; height: 16px; background: linear-gradient(#ccc, #ccc) 0 0 / 1px 16px no-repeat, linear-gradient(#ccc, #ccc) 0 8px / 11px 1px no-repeat; }
.branch:last-child .tee { background-size: 1px 8px, 11px 1px; }
.stem { padding-left: 49px; } .stem svg { color: #0a30ec; margin: 0 7px 0 4px; }
.split, .hsplit, .vsplit { background: #c3c3c3; display: flex; align-items: center; justify-content: center; gap: 1px; }
.split i, .hsplit i { width: 1px; height: 4px; background: #999; }
.vsplit { flex-direction: column; }
.vsplit i { height: 1px; width: 4px; background: #999; }
.props { border: 1px solid #9a9a9a; margin: 0 1px 1px; display: grid; grid-template-rows: 87px 1fr; background: #eee; }
.prop-table { margin: 3px 2px 2px 3px; background: #fdfdfd; }
.prop-head { display: grid; grid-template-columns: 100px 1fr; height: 23px; line-height: 22px; border-bottom: 1px solid #e8e8e8; color: #c2c2c2; text-align: center; }
.prop-head span:first-child { border-right: 1px solid #e8e8e8; }
.prop-head span + span { padding-right: 3px; }
.bottom-tabs { border-top: 2px solid #a4a4a4; }
.bottom-tabs .tab { width: 87px; height: 29px; }
.bottom-tabs .on { width: 79px; border-top: 3px solid #4a86cf; margin-top: -2px; height: 31px; padding: 0 3px 1px 0; }
.mdi { display: grid; grid-template-rows: 496px 34px; }
.scene { display: block; width: 1106px; height: 496px; }
.grid-line { shape-rendering: auto; }
.axis { font: 10px "DejaVu Sans", sans-serif; letter-spacing: 0; fill: #102a4a; }
.mdi-tabs { display: flex; align-items: center; background: linear-gradient(#4a86cf, #4a86cf) 0 0 / 185px 3px no-repeat, linear-gradient(#aaa, #aaa) 0 0 / 100% 1px no-repeat, #d6d6d6; border-bottom: 1px solid #999; border-left: 1px solid #999; padding-left: 53px; letter-spacing: .2px; }
.mdi-tabs svg { width: 14px; height: 14px; margin: 2px 0 0 0; }
.report { display: grid; grid-template-rows: 15px 45px 34px; }
.output { background: #fdfdfd; }
.report-tabs { border-top: 1px solid #aaa; }
.report-tabs .tab { width: 145px; height: 31px; }
.report-tabs .on { width: 206px; border-top: 3px solid #4a86cf; height: 33px; margin-top: -1px; padding-bottom: 2px; }
```
FILE: scene.js
```js
// Isometric ground grid centred on the model origin.
const ox = 732, oy = 507, slope = 0.5777;
function lines(step, skip) {
  let d = '';
  for (let i = -60; i <= 60; i++) {
    if (skip && i % 10 === 0) continue;
    const x = ox + i * step;
    d += `M${x - 1600} ${oy - 1600 * slope}L${x + 1600} ${oy + 1600 * slope}`;
    d += `M${x - 1600} ${oy + 1600 * slope}L${x + 1600} ${oy - 1600 * slope}`;
  }
  return d;
}
document.getElementById('minor').setAttribute('d', lines(41.2, true));
document.getElementById('major').setAttribute('d', lines(412, false));

// Inner leaves of the crown, one layer behind the modelled ones and one in front.
let seed = 17;
const rnd = () => (seed = (seed * 16807) % 2147483647) / 2147483647;
const shades = ['#0c700f', '#0a640d', '#0a640d', '#08580b', '#075009', '#053806'];
function scatter(count, size, width) {
  let leaves = '';
  for (let i = 0; i < count; i++) {
    const x = 610 + rnd() * 265, y = 115 + rnd() * 285;
    const a = rnd() * 360, l = size * (.5 + rnd()), w = 1 + rnd() * width;
    leaves += `<path transform="translate(${x} ${y}) rotate(${a})" d="M0 0L${l * .6} ${-w}L${l * 1.4} 0L${l * .5} ${w}Z" fill="${shades[Math.floor(rnd() * 6)]}"/>`;
  }
  return leaves;
}
document.getElementById('foliage').innerHTML = scatter(330, 16, 6);
document.getElementById('foliageTop').innerHTML = scatter(190, 12, 3);

// Branch entries of the model tree.
let rows = '';
for (let n = 1; n <= 15; n++) {
  rows += `<div class="row branch"><i class="guide"></i><i class="tee"></i><svg><use href="#cube"/></svg><span>Tree01_Branch_${n}</span></div>`;
}
document.getElementById('branches').innerHTML = rows;
```
